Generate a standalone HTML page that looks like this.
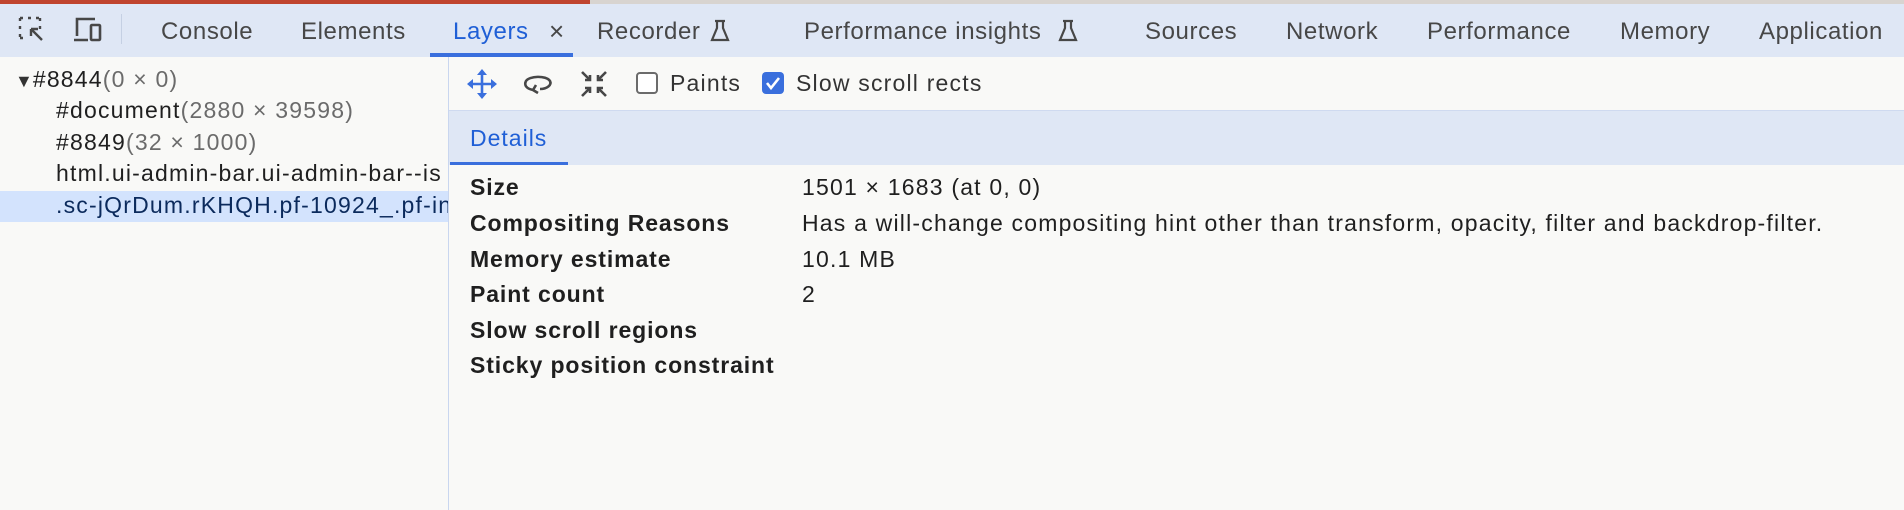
<!DOCTYPE html>
<html><head><meta charset="utf-8"><style>
*{margin:0;padding:0;box-sizing:border-box}
body{width:1904px;height:510px;overflow:hidden;background:#f9f9f7;font-family:"Liberation Sans",sans-serif;position:relative;color:#1f1f1f}
.a{position:absolute;white-space:nowrap}
.tab{font-size:24px;letter-spacing:0.6px;color:#474747;top:18px}
.tree{font-size:23px;letter-spacing:1.2px;color:#1f1f1f}
.tree span{color:#6b6b6b}
.lbl{font-size:23px;letter-spacing:0.9px;font-weight:bold;left:470px}
.val{font-size:23px;letter-spacing:1.2px;left:802px}
</style></head><body>
<div class="a" style="left:0;top:0;width:590px;height:4px;background:#c0452f"></div>
<div class="a" style="left:590px;top:0;width:1314px;height:4px;background:#d8d4d0"></div>
<div class="a" style="left:0;top:4px;width:1904px;height:53px;background:#dfe7f5"></div>
<div class="a" style="left:430px;top:53px;width:143px;height:4px;background:#3a6fdd"></div>
<div class="a" style="left:121px;top:14px;width:1px;height:30px;background:#c5d0e3"></div>
<svg class="a" style="left:18px;top:16px" width="30" height="30" viewBox="0 0 30 30" fill="none" stroke="#474747" stroke-width="2.4"><path d="M2 2h4M10 2h4M18 2h4M2 2v4M2 10v4M2 18v4M2 22h4M22 2v4M22 10v3" stroke-dasharray="3 3"/><path d="M13 13l11 11M13 13h7M13 13v7"/></svg>
<svg class="a" style="left:73px;top:16px" width="32" height="30" viewBox="0 0 32 30" fill="none" stroke="#474747" stroke-width="2.6"><path d="M4 20V3h18M1 24h14"/><rect x="18" y="9" width="9" height="15" rx="1"/></svg>
<div class="a tab" style="left:161px">Console</div>
<div class="a tab" style="left:301px">Elements</div>
<div class="a tab" style="left:453px;color:#1f5fd6">Layers</div>
<div class="a tab" style="left:549px;font-size:26px;top:16px">×</div>
<div class="a tab" style="left:597px">Recorder</div>
<svg class="a" style="left:710px;top:19px" width="20" height="24" viewBox="0 0 20 24" fill="none" stroke="#474747" stroke-width="2.2"><path d="M5 2h10M7 2v7L2 21h16L13 9V2"/></svg>
<div class="a tab" style="left:804px">Performance insights</div>
<svg class="a" style="left:1058px;top:19px" width="20" height="24" viewBox="0 0 20 24" fill="none" stroke="#474747" stroke-width="2.2"><path d="M5 2h10M7 2v7L2 21h16L13 9V2"/></svg>
<div class="a tab" style="left:1145px">Sources</div>
<div class="a tab" style="left:1286px">Network</div>
<div class="a tab" style="left:1427px">Performance</div>
<div class="a tab" style="left:1620px">Memory</div>
<div class="a tab" style="left:1759px">Application</div>

<div class="a" style="left:448px;top:57px;width:1px;height:453px;background:#c9d6ef"></div>
<div class="a" style="left:0;top:191px;width:448px;height:31px;background:#d3e3fd"></div>
<div class="a tree" style="left:15px;top:66px"><span style="color:#333;font-size:18px;letter-spacing:0">▼</span>#8844<span>(0 × 0)</span></div>
<div class="a tree" style="left:56px;top:97px">#document<span>(2880 × 39598)</span></div>
<div class="a tree" style="left:56px;top:129px">#8849<span>(32 × 1000)</span></div>
<div class="a tree" style="left:56px;top:160px;width:392px;overflow:hidden">html.ui-admin-bar.ui-admin-bar--is</div>
<div class="a tree" style="left:56px;top:192px;width:392px;overflow:hidden;color:#0b2a5c">.sc-jQrDum.rKHQH.pf-10924_.pf-in</div>

<svg class="a" style="left:466px;top:68px" width="32" height="32" viewBox="0 0 32 32" fill="#3a6fdd" stroke="#3a6fdd" stroke-width="2.6"><path d="M16 3v26M3 16h26" fill="none"/><path d="M16 1l-5 6h10zM16 31l-5-6h10zM1 16l6-5v10zM31 16l-6-5v10z" stroke="none"/></svg>
<svg class="a" style="left:522px;top:72px" width="32" height="24" viewBox="0 0 32 24" fill="none" stroke="#474747" stroke-width="2.6"><path d="M12 18C4 17 2 13 4 9c3-5 20-6 24 0 2 4-3 8-10 8"/><path d="M14 13l-3 5 5 3"/></svg>
<svg class="a" style="left:580px;top:70px" width="28" height="28" viewBox="0 0 28 28" fill="none" stroke="#474747" stroke-width="2.6"><path d="M2 2l7 7M26 2l-7 7M2 26l7-7M26 26l-7-7"/><path d="M5 10h5V5M23 10h-5V5M5 18h5v5M23 18h-5v5"/></svg>
<div class="a" style="left:636px;top:72px;width:22px;height:22px;border:2px solid #6b6b6b;border-radius:4px;background:#fff"></div>
<div class="a" style="left:670px;top:70px;font-size:23px;letter-spacing:1.2px;color:#333">Paints</div>
<div class="a" style="left:762px;top:72px;width:22px;height:22px;border-radius:4px;background:#3a6fdd"></div>
<svg class="a" style="left:764px;top:74px" width="18" height="18" viewBox="0 0 18 18" fill="none" stroke="#fff" stroke-width="2.6"><path d="M3 9l4 5 8-10"/></svg>
<div class="a" style="left:796px;top:70px;font-size:23px;letter-spacing:1.2px;color:#333">Slow scroll rects</div>

<div class="a" style="left:449px;top:111px;width:1455px;height:54px;background:#dfe7f5"></div>
<div class="a" style="left:449px;top:110px;width:1455px;height:1px;background:#cfdaf0"></div>
<div class="a" style="left:450px;top:162px;width:118px;height:3px;background:#3a6fdd"></div>
<div class="a" style="left:470px;top:125px;font-size:23px;letter-spacing:1px;color:#1f5fd6">Details</div>

<div class="a lbl" style="top:174px">Size</div><div class="a val" style="top:174px">1501 × 1683 (at 0, 0)</div>
<div class="a lbl" style="top:210px">Compositing Reasons</div><div class="a val" style="top:210px">Has a will-change compositing hint other than transform, opacity, filter and backdrop-filter.</div>
<div class="a lbl" style="top:246px">Memory estimate</div><div class="a val" style="top:246px">10.1 MB</div>
<div class="a lbl" style="top:281px">Paint count</div><div class="a val" style="top:281px">2</div>
<div class="a lbl" style="top:317px">Slow scroll regions</div>
<div class="a lbl" style="top:352px">Sticky position constraint</div>
</body></html>
